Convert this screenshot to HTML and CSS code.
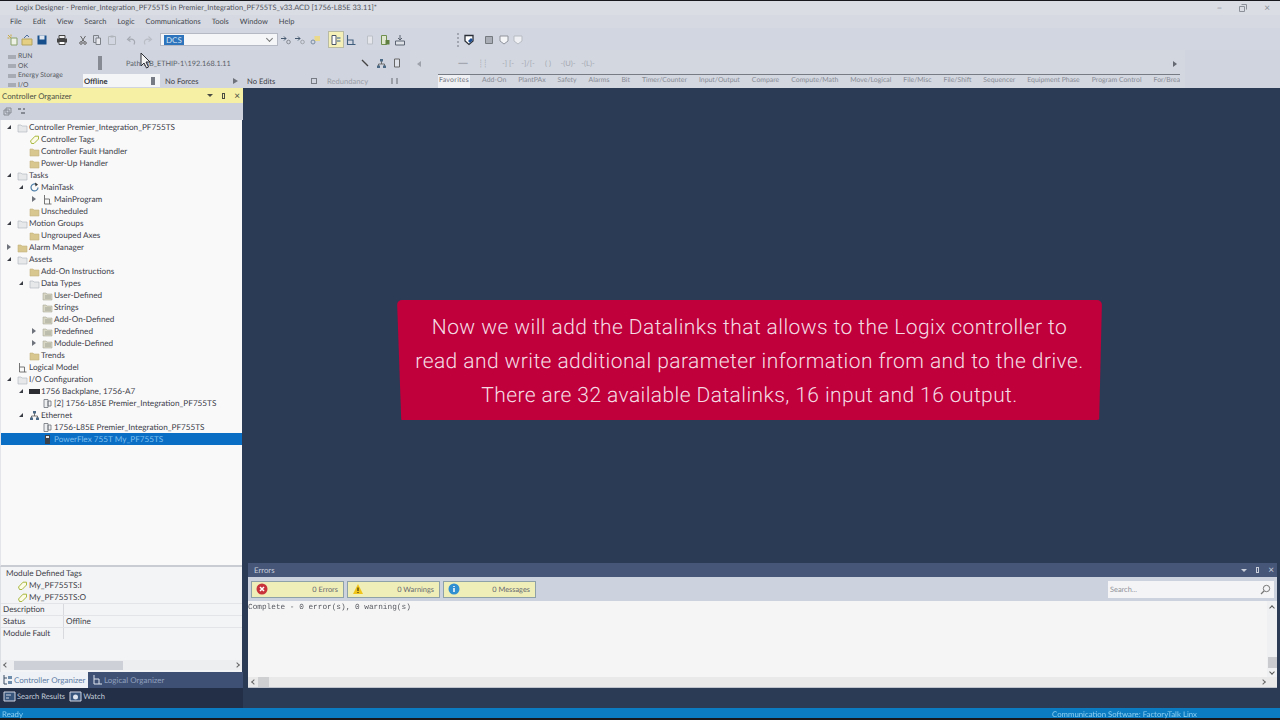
FILE: index.html
```html
<!DOCTYPE html>
<html lang="en">

<head>
    <meta charset="UTF-8">
    <meta name="viewport" content="width=device-width, initial-scale=1.0">
    <title>Logix Designer</title>
    <link rel="stylesheet" href="styles.css">
</head>

<body>
    <!-- Shared tree icons -->
    <svg class="sprite" aria-hidden="true">
        <symbol id="folder" viewBox="0 0 11 11"><path d="M1 3h3l1 1h5v6H1z" fill="#d8c78f" stroke="#c2b27e" stroke-width=".6"/></symbol>
        <symbol id="group" viewBox="0 0 11 11"><path d="M1 3h3l1 1h5v6H1z" fill="#e6e8ea" stroke="#b5bac0" stroke-width=".7"/></symbol>
        <symbol id="types" viewBox="0 0 11 11"><path d="M1 3h3l1 1h5v6H1z" fill="#d8d6c4" stroke="#a9a99a" stroke-width=".6"/><path d="M3 6h6M3 8h6" stroke="#8d9088" stroke-width=".7"/></symbol>
        <symbol id="tag" viewBox="0 0 11 11"><path d="M1.500 7 6 2.200h3.500V5L5 9.500H2.500z" fill="#fbfbe8" stroke="#a9b83e" stroke-width="1"/></symbol>
        <symbol id="module" viewBox="0 0 11 11"><path d="M2 1.500h4v8H2zM6 3h3v5H6z" fill="#eef0f2" stroke="#6d7278" stroke-width=".8"/></symbol>
        <symbol id="net" viewBox="0 0 11 11"><path d="M5.500 3v3M2.500 8V6h6v2" fill="none" stroke="#555" stroke-width=".8"/><path d="M4 1h3v2.500H4zM1 7.500h3V10H1zM7 7.500h3V10H7z" fill="#4c6a86"/></symbol>
        <symbol id="ladder" viewBox="0 0 11 11"><path d="M2.500 1v9M2.500 5h5v5M2.500 10h7" fill="none" stroke="#666" stroke-width=".9"/></symbol>
    </svg>

    <div class="app">
        <!-- Title and menu -->
        <header class="title-bar">
            <span class="title-text">Logix Designer - Premier_Integration_PF755TS in Premier_Integration_PF755TS_v33.ACD [1756-L85E 33.11]*</span>
            <div class="window-btns">
                <span>&#8211;</span>
                <svg width="8" height="8" viewBox="0 0 8 8"><path d="M2.500.500h5v5M.500 2.500h5v5h-5z" fill="none" stroke="#8b9099"/></svg>
                <span>&#215;</span>
            </div>
        </header>
        <nav class="menu-bar">
            <a>File</a><a>Edit</a><a>View</a><a>Search</a><a>Logic</a><a>Communications</a><a>Tools</a><a>Window</a><a>Help</a>
        </nav>

        <!-- Main toolbar -->
        <div class="tool-bar">
            <svg class="tool" viewBox="0 0 14 14"><path d="M5 5h6v7H5z" fill="#eef2e6" stroke="#8aa06a"/><path d="M2 2l3 3M5 1.500v2M1.500 5h2" stroke="#c9a83c"/></svg>
            <svg class="tool" viewBox="0 0 14 14"><path d="M2 6h10v6H2z" fill="#e4cf83" stroke="#b5a35f"/><path d="M4 5l3-3 2 2" fill="none" stroke="#4d6d9a"/></svg>
            <svg class="tool ml1" viewBox="0 0 14 14"><path d="M2.500 2.500h9v9h-9z" fill="#174f8d"/><path d="M4.500 2.500h5v4h-5z" fill="#dfe6ef"/></svg>
            <svg class="tool ml6" viewBox="0 0 14 14"><path d="M4 2.500h6v3H4z" fill="#eee" stroke="#444"/><path d="M2 5.500h10v4H2z" fill="#444"/><path d="M4 8.500h6v3H4z" fill="#fff" stroke="#444"/></svg>
            <svg class="tool ml7" viewBox="0 0 14 14"><path d="M4.500 3l4 6M9.500 3l-4 6" stroke="#666" fill="none"/><circle cx="5" cy="10" r="1.300" fill="none" stroke="#666"/><circle cx="9" cy="10" r="1.300" fill="none" stroke="#666"/></svg>
            <svg class="tool" viewBox="0 0 14 14"><path d="M3.500 2.500h5v7h-5z" fill="none" stroke="#7d8188"/><path d="M6 5h4.500v6.500H6z" fill="#e6e8ee" stroke="#7d8188"/></svg>
            <svg class="tool ml1" viewBox="0 0 14 14"><path d="M3.500 3.500h7v8h-7z" fill="none" stroke="#b0b4bb"/><path d="M5.500 2.500h3v2h-3z" fill="#b0b4bb"/></svg>
            <svg class="tool ml5" viewBox="0 0 14 14"><path d="M10 11.500c1.800-3.500-.5-6.500-5.500-5" fill="none" stroke="#a4a8b0" stroke-width="1.100"/><path d="M6.500 3.500l-3 3 3 2" fill="none" stroke="#a4a8b0" stroke-width="1.100"/></svg>
            <svg class="tool ml3" viewBox="0 0 14 14"><path d="M4 11.500c-1.800-3.500.5-6.500 5.500-5" fill="none" stroke="#b9bdc5" stroke-width="1.100"/><path d="M7.500 3.500l3 3-3 2" fill="none" stroke="#b9bdc5" stroke-width="1.100"/></svg>
            <div class="combo"><span class="combo-sel">DCS</span><span class="combo-arrow"></span></div>
            <svg class="tool" viewBox="0 0 14 14"><path d="M2 5.500h5M5 3.500l2 2-2 2" stroke="#46596f" fill="none"/><circle cx="9.500" cy="9" r="1.800" fill="none" stroke="#868a92"/></svg>
            <svg class="tool" viewBox="0 0 14 14"><path d="M2 5.500h5M5 3.500l2 2-2 2" stroke="#46596f" fill="none"/><circle cx="9.500" cy="9" r="1.800" fill="none" stroke="#a0a4ab"/></svg>
            <svg class="tool ml1" viewBox="0 0 14 14"><path d="M6.500 3h5.500v5H6.500z" fill="#ead98b"/><circle cx="5" cy="9" r="2" fill="none" stroke="#7a8ea4"/></svg>
            <div class="tool-on ml7"><svg class="tool" viewBox="0 0 14 14"><path d="M3 2.500h4v9H3z" fill="#fff" stroke="#4a5568"/><path d="M8 5h3.500M8 8h3.500" stroke="#2f5f8e"/></svg></div>
            <svg class="tool ml1" viewBox="0 0 14 14"><path d="M3.500 2v9.500h8M3.500 7h5.500v4.500" fill="none" stroke="#3f5d7d" stroke-width="1.100"/></svg>
            <svg class="tool ml5" viewBox="0 0 14 14"><path d="M4.500 3h5v8h-5z" fill="#e4e6eb" stroke="#bcc0c7"/></svg>
            <svg class="tool ml1" viewBox="0 0 14 14"><path d="M3.500 2.500h5v9h-5z" fill="#dfe8cf" stroke="#6e8f4e"/><path d="M7.500 7h4v4.500h-4z" fill="#5e7f3f"/></svg>
            <svg class="tool ml1" viewBox="0 0 14 14"><path d="M2.500 8h9v4h-9z" fill="#dfe3e8" stroke="#5b6470"/><path d="M7 2v5M5 5l2 2 2-2" fill="none" stroke="#5b6470"/></svg>
            <span class="grip"></span>
            <svg class="tool" viewBox="0 0 14 14"><path d="M3 2.500h8v5.500l-4 3.500L3 8z" fill="#fff" stroke="#2b3038" stroke-width="1.300"/><path d="M6 8l3-3 2 2-3 3z" fill="#1e4f95"/></svg>
            <svg class="tool ml6" viewBox="0 0 14 14"><path d="M3.500 3.500h7v7h-7z" fill="#a9aeb6" stroke="#74797f"/></svg>
            <svg class="tool ml1" viewBox="0 0 14 14"><path d="M3 3h8v5l-4 3-4-3z" fill="#f4f5f7" stroke="#8f949c"/></svg>
            <svg class="tool" viewBox="0 0 14 14"><path d="M3 3h8v5l-4 3-4-3z" fill="#eef0f3" stroke="#b7bbc2"/></svg>
        </div>

        <!-- Controller status and instruction palette -->
        <div class="status-strip">
            <div class="ctrl-status">
                <ul class="leds">
                    <li>RUN</li>
                    <li>OK</li>
                    <li>Energy Storage</li>
                    <li>I/O</li>
                </ul>
                <div class="ctrl-info">
                    <div class="path-row">
                        <span class="key-switch"></span>
                        <span class="path-text">Path: AB_ETHIP-1\192.168.1.11</span>
                        <div class="path-icons">
                            <svg width="10" height="10" viewBox="0 0 10 10"><path d="M2 2l3 3M5 5l3 3" stroke="#444" stroke-width="1.400"/></svg>
                            <svg width="11" height="11" viewBox="0 0 11 11"><use href="#net"/></svg>
                            <svg width="8" height="10" viewBox="0 0 8 10"><path d="M1.500 1h5v8h-5z" fill="#dfe2e8" stroke="#666"/></svg>
                        </div>
                    </div>
                    <div class="state-row">
                        <div class="state state-offline"><b>Offline</b><i class="state-mark"></i></div>
                        <div class="state state-forces">No Forces<i class="state-tri"></i></div>
                        <div class="state state-edits">No Edits<i class="state-lock"></i></div>
                        <div class="state state-red">Redundancy<i class="state-pair"></i></div>
                    </div>
                </div>
            </div>
            <div class="palette">
                <div class="rungs">
                    <span class="rung-arrow"></span>
                    <div class="rung-glyphs">
                        <span>&#9473;&#9473;</span><span>&#9482;&#9482;</span><span class="wide">-] [-</span><span>-]/[-</span><span>( )</span><span>-(U)-</span><span>-(L)-</span>
                    </div>
                    <span class="rung-next"></span>
                </div>
                <div class="pal-tabs">
                    <a class="active">Favorites</a><a>Add-On</a><a>PlantPAx</a><a>Safety</a><a>Alarms</a><a>Bit</a><a>Timer/Counter</a><a>Input/Output</a><a>Compare</a><a>Compute/Math</a><a>Move/Logical</a><a>File/Misc</a><a>File/Shift</a><a>Sequencer</a><a>Equipment Phase</a><a>Program Control</a><a>For/Brea</a>
                </div>
            </div>
        </div>

        <div class="work">
            <!-- Left pane -->
            <aside class="left-pane">
                <div class="pane-head yellow">
                    <span>Controller Organizer</span>
                    <div class="pane-btns"><i class="pin-down"></i><i class="pin"></i><i class="close">&#215;</i></div>
                </div>
                <div class="tree-tools">
                    <svg width="9" height="9" viewBox="0 0 9 9"><path d="M3 1h5v5H3zM1 3h5v5H1z" fill="none" stroke="#868b93"/></svg>
                    <svg width="9" height="9" viewBox="0 0 9 9"><path d="M1 1h3v2H1zM6 1h2v2H6zM4 5h4v2H4z" fill="#868b93"/></svg>
                </div>
                <div class="tree">
                    <div class="row l0"><i class="open"></i><svg class="ico"><use href="#group"/></svg>Controller Premier_Integration_PF755TS</div>
                    <div class="row l1"><i></i><svg class="ico"><use href="#tag"/></svg>Controller Tags</div>
                    <div class="row l1"><i></i><svg class="ico"><use href="#folder"/></svg>Controller Fault Handler</div>
                    <div class="row l1"><i></i><svg class="ico"><use href="#folder"/></svg>Power-Up Handler</div>
                    <div class="row l0"><i class="open"></i><svg class="ico"><use href="#group"/></svg>Tasks</div>
                    <div class="row l1"><i class="open"></i><svg class="ico" viewBox="0 0 11 11"><path d="M9 5.500A3.500 3.500 0 1 1 7 2.300" fill="none" stroke="#4e7fa8" stroke-width="1.200"/><path d="M6 .5 9 2.500 6.500 4.500z" fill="#333"/></svg>MainTask</div>
                    <div class="row l2"><i class="closed"></i><svg class="ico"><use href="#ladder"/></svg>MainProgram</div>
                    <div class="row l1"><i></i><svg class="ico"><use href="#folder"/></svg>Unscheduled</div>
                    <div class="row l0"><i class="open"></i><svg class="ico"><use href="#group"/></svg>Motion Groups</div>
                    <div class="row l1"><i></i><svg class="ico"><use href="#folder"/></svg>Ungrouped Axes</div>
                    <div class="row l0"><i class="closed"></i><svg class="ico"><use href="#folder"/></svg>Alarm Manager</div>
                    <div class="row l0"><i class="open"></i><svg class="ico"><use href="#group"/></svg>Assets</div>
                    <div class="row l1"><i></i><svg class="ico"><use href="#folder"/></svg>Add-On Instructions</div>
                    <div class="row l1"><i class="open"></i><svg class="ico"><use href="#group"/></svg>Data Types</div>
                    <div class="row l2"><i></i><svg class="ico"><use href="#types"/></svg>User-Defined</div>
                    <div class="row l2"><i></i><svg class="ico"><use href="#types"/></svg>Strings</div>
                    <div class="row l2"><i></i><svg class="ico"><use href="#types"/></svg>Add-On-Defined</div>
                    <div class="row l2"><i class="closed"></i><svg class="ico"><use href="#types"/></svg>Predefined</div>
                    <div class="row l2"><i class="closed"></i><svg class="ico"><use href="#types"/></svg>Module-Defined</div>
                    <div class="row l1"><i></i><svg class="ico"><use href="#folder"/></svg>Trends</div>
                    <div class="row l0"><i></i><svg class="ico"><use href="#ladder"/></svg>Logical Model</div>
                    <div class="row l0"><i class="open"></i><svg class="ico"><use href="#group"/></svg>I/O Configuration</div>
                    <div class="row l1"><i class="open"></i><svg class="ico" viewBox="0 0 11 11"><path d="M0 3h11v5H0z" fill="#2b2d33"/></svg>1756 Backplane, 1756-A7</div>
                    <div class="row l2"><i></i><svg class="ico"><use href="#module"/></svg>[2] 1756-L85E Premier_Integration_PF755TS</div>
                    <div class="row l1"><i class="open"></i><svg class="ico"><use href="#net"/></svg>Ethernet</div>
                    <div class="row l2"><i></i><svg class="ico"><use href="#module"/></svg>1756-L85E Premier_Integration_PF755TS</div>
                    <div class="row l2 selected"><i></i><svg class="ico" viewBox="0 0 11 11"><path d="M3 1h5v9H3z" fill="#3b4148"/><path d="M4 2h3v2H4z" fill="#e6e8ea"/></svg>PowerFlex 755T My_PF755TS</div>
                </div>

                <div class="details">
                    <div class="detail-title">Module Defined Tags</div>
                    <div class="detail-tag"><svg class="ico"><use href="#tag"/></svg>My_PF755TS:I</div>
                    <div class="detail-tag"><svg class="ico"><use href="#tag"/></svg>My_PF755TS:O</div>
                    <div class="prop"><span>Description</span><span></span></div>
                    <div class="prop"><span>Status</span><span>Offline</span></div>
                    <div class="prop"><span>Module Fault</span><span></span></div>
                    <div class="hscroll">
                        <i class="arrow-l"></i>
                        <span class="thumb"></span>
                        <i class="arrow-r"></i>
                    </div>
                </div>

                <div class="org-tabs">
                    <a class="active"><svg class="ico" viewBox="0 0 11 11"><path d="M2 1v9h3M2 4h3" fill="none" stroke="#394a63"/><path d="M6 2h4v3H6zM6 7h4v3H6z" fill="#6d8cab"/></svg>Controller Organizer</a>
                    <a><svg class="ico" viewBox="0 0 11 11"><path d="M2 1v9h8M2 5h5v5" fill="none" stroke="#dfe5ee"/></svg>Logical Organizer</a>
                </div>
                <div class="dock-tabs">
                    <a><svg class="ico wide" viewBox="0 0 13 11"><path d="M1 1h11v9H1z" fill="#38557c" stroke="#cfd6e2"/><path d="M3 4h5M3 7h3" stroke="#cfd6e2"/></svg>Search Results</a>
                    <a><svg class="ico wide" viewBox="0 0 13 11"><path d="M1 1h11v9H1z" fill="#38557c" stroke="#cfd6e2"/><circle cx="6.500" cy="6" r="2.500" fill="#dfe5ee"/></svg>Watch</a>
                </div>
            </aside>

            <!-- Editor area -->
            <main class="main-area">
                <div class="editor"></div>
                <section class="errors">
                    <div class="pane-head slate">
                        <span>Errors</span>
                        <div class="pane-btns"><i class="pin-down"></i><i class="pin"></i><i class="close">&#215;</i></div>
                    </div>
                    <div class="err-tools">
                        <div class="err-btn"><svg width="12" height="12" viewBox="0 0 12 12"><circle cx="6" cy="6" r="5.500" fill="#c8323a"/><path d="M4 4l4 4M8 4l-4 4" stroke="#fff" stroke-width="1.500"/></svg><span>0 Errors</span></div>
                        <div class="err-btn"><svg width="12" height="12" viewBox="0 0 12 12"><path d="M6 1l5 10H1z" fill="#f0c419"/><path d="M6 4.500v3.500M6 9v1" stroke="#4b3f10" stroke-width="1.300"/></svg><span>0 Warnings</span></div>
                        <div class="err-btn"><svg width="12" height="12" viewBox="0 0 12 12"><circle cx="6" cy="6" r="5.500" fill="#2f8fd0"/><path d="M6 5v4M6 3v1" stroke="#fff" stroke-width="1.500"/></svg><span>0 Messages</span></div>
                        <div class="err-search">
                            <span>Search...</span>
                            <svg width="11" height="11" viewBox="0 0 11 11"><circle cx="6.500" cy="4.500" r="3.200" fill="none" stroke="#777"/><path d="M4 7 1 10" stroke="#777" stroke-width="1.200"/></svg>
                        </div>
                    </div>
                    <div class="err-body">
                        <pre class="err-text">Complete - 0 error(s), 0 warning(s)</pre>
                        <div class="vscroll"><i class="up"></i><span class="thumb"></span><i class="down"></i></div>
                    </div>
                    <div class="err-hscroll">
                        <i class="arrow-l"></i><span class="thumb"></span><i class="arrow-r"></i>
                    </div>
                </section>
            </main>
        </div>

        <footer class="status-bar">
            <span>Ready</span>
            <span class="status-right">Communication Software: FactoryTalk Linx</span>
        </footer>

        <!-- Caption overlay -->
        <div class="caption">
            Now we will add the Datalinks that allows to the Logix controller to<br>
            read and write additional parameter information from and to the drive.<br>
            There are 32 available Datalinks, 16 input and 16 output.
        </div>

        <!-- Mouse pointer -->
        <svg class="cursor" width="11" height="17" viewBox="0 0 11 17"><path d="M1 1v13l3-3 2.500 5 2-1-2.500-5h4z" fill="#f4f4f4" stroke="#2a2d33"/></svg>
    </div>
</body>

</html>
```
FILE: styles.css
```css
:root {
    --bar-bg: #d0d4de;
    --dark-bg: #2b3a55;
    --slate: #465679;
    --selected: #0b6ec5;
    --status-blue: #0b7cc2;
    --ui-font: Lato, 'Noto Sans', sans-serif;
}

* {
    margin: 0;
    padding: 0;
    box-sizing: border-box;
}

body {
    width: 1280px;
    height: 720px;
    overflow: hidden;
    background-color: #16181d;
    font-family: var(--ui-font);
    font-size: 8.2px;
    text-rendering: geometricPrecision;
    color: #3c4048;
}

i {
    font-style: normal;
}

.sprite {
    display: none;
}

.app {
    position: relative;
    width: 1280px;
    height: 717px;
    margin-top: 1px;
    display: flex;
    flex-direction: column;
    background-color: var(--bar-bg);
    filter: blur(0.35px);
}

/* Title and menu */
.title-bar {
    height: 14px;
    flex: none;
    display: flex;
    align-items: center;
    justify-content: space-between;
    padding: 0 0 1px 16px;
    background-color: #dadde4;
    font-size: 7.45px;
    color: #4d5159;
}

.window-btns {
    display: flex;
    align-items: center;
    gap: 17px;
    padding-right: 10px;
    font-size: 10px;
    color: #8b9099;
}

.menu-bar {
    height: 13px;
    flex: none;
    display: flex;
    align-items: center;
    gap: 11px;
    padding-left: 10px;
    background-color: #d6d9e1;
    font-size: 7.5px;
    color: #444850;
}

.tool-bar {
    height: 22px;
    flex: none;
    display: flex;
    align-items: center;
    padding: 1px 0 0 6px;
    background-color: #d2d6e0;
}

.tool {
    width: 14px;
    height: 14px;
    flex: none;
}

.ml1 {
    margin-left: 1px;
}

.ml3 {
    margin-left: 3px;
}

.ml5 {
    margin-left: 5px;
}

.ml6 {
    margin-left: 6px;
}

.ml7 {
    margin-left: 7px;
}

.tool-on {
    display: flex;
    align-items: center;
    height: 15px;
    background-color: #f5efb8;
    outline: 1px solid #b9bba2;
}

.combo {
    width: 118px;
    height: 13px;
    flex: none;
    display: flex;
    align-items: center;
    justify-content: space-between;
    margin: 0 1px 0 5px;
    padding: 0 3px;
    background-color: #f5f6f8;
    border: 1px solid #b4b9c4;
    font-size: 8px;
}

.combo-sel {
    padding: 0 2px;
    background-color: #2e74bd;
    color: #d7e4f2;
}

.combo-arrow {
    width: 5px;
    height: 5px;
    margin: -2px 2px 0 0;
    border-right: 1px solid #777;
    border-bottom: 1px solid #777;
    transform: rotate(45deg);
}

.grip {
    width: 2px;
    height: 14px;
    flex: none;
    margin: 0 3px 0 50px;
    border-left: 2px dotted #a2a6b0;
}

/* Status strip */
.status-strip {
    height: 38px;
    flex: none;
    display: flex;
    background-color: #d0d4de;
}

.ctrl-status {
    width: 410px;
    flex: none;
    display: flex;
}

.leds {
    width: 83px;
    flex: none;
    padding: 2px 0 0 8px;
    list-style: none;
    font-size: 6.8px;
    line-height: 9.5px;
    color: #50545c;
}

.leds li {
    display: flex;
    align-items: center;
    gap: 2px;
}

.leds li::before {
    content: '';
    width: 8px;
    height: 4px;
    background-color: #a7abb4;
}

.ctrl-info {
    flex: 1;
    display: flex;
    flex-direction: column;
}

.path-row {
    height: 24px;
    display: flex;
    align-items: center;
    padding-top: 2px;
    font-size: 7.3px;
    color: #5b5f68;
}

.key-switch {
    width: 4px;
    height: 14px;
    margin: 0 24px 0 15px;
    background-color: #868a92;
}

.path-text {
    flex: 1;
}

.path-icons {
    display: flex;
    align-items: center;
    gap: 6px;
    padding-right: 9px;
}

.state-row {
    height: 13px;
    display: flex;
    gap: 3px;
    font-size: 7.6px;
}

.state {
    display: flex;
    align-items: center;
    justify-content: space-between;
    padding: 0 5px 0 1px;
}

.state-offline {
    width: 77px;
    background-color: #f4f5f7;
    color: #33363c;
}

.state-forces {
    width: 80px;
    padding-left: 2px;
}

.state-edits {
    width: 76px;
    padding-left: 1px;
}

.state-red {
    width: 78px;
    padding-left: 2px;
    color: #9a9ea7;
}

.state-mark {
    width: 4px;
    height: 8px;
    background-color: #777b83;
}

.state-tri {
    border-left: 5px solid #6e727a;
    border-top: 3px solid transparent;
    border-bottom: 3px solid transparent;
}

.state-lock {
    width: 6px;
    height: 6px;
    border: 1px solid #777b83;
}

.state-pair {
    width: 7px;
    height: 6px;
    border-left: 2px solid #9a9ea7;
    border-right: 2px solid #9a9ea7;
}

.palette {
    width: 775px;
    flex: none;
    padding: 0 5px 0 28px;
    display: flex;
    flex-direction: column;
    background-color: #d3d7e0;
}

.rungs {
    height: 24px;
    display: flex;
    align-items: center;
    margin-left: -21px;
    padding-top: 3px;
}

.rung-arrow {
    border-right: 4px solid #9ea2ab;
    border-top: 3px solid transparent;
    border-bottom: 3px solid transparent;
}

.rung-glyphs {
    flex: 1;
    display: flex;
    padding-left: 32px;
    font-size: 7.5px;
    color: #a3a7b0;
}

.rung-glyphs span {
    width: 20px;
    text-align: center;
}

.rung-glyphs .wide {
    margin-left: 5px;
}

.rung-next {
    margin-right: 3px;
    border-left: 4px solid #656971;
    border-top: 3px solid transparent;
    border-bottom: 3px solid transparent;
}

.pal-tabs {
    height: 14px;
    display: flex;
    gap: 12px;
    border-top: 1px solid #777b84;
    overflow: hidden;
    font-size: 6.9px;
    line-height: 10px;
    color: #888c95;
    white-space: nowrap;
}

.pal-tabs a.active {
    padding: 0 1px;
    letter-spacing: 0.3px;
    background-color: #eff0f3;
    color: #6f737b;
}

/* Layout below the toolbars */
.work {
    flex: 1;
    min-height: 0;
    display: flex;
    background-color: var(--dark-bg);
}

.left-pane {
    width: 243px;
    flex: none;
    display: flex;
    flex-direction: column;
}

.pane-head {
    height: 14px;
    flex: none;
    display: flex;
    align-items: center;
    justify-content: space-between;
    padding: 0 3px 0 2px;
    font-size: 7.8px;
}

.pane-head.yellow {
    height: 15px;
    background-color: #f5f0a3;
    color: #4a4c44;
}

.pane-head.slate {
    padding-left: 6px;
    background-color: var(--slate);
    color: #c9d0dc;
}

.pane-btns {
    display: flex;
    align-items: center;
    gap: 9px;
    font-size: 10px;
}

.pin-down {
    border-top: 3px solid currentColor;
    border-left: 3px solid transparent;
    border-right: 3px solid transparent;
}

.pin {
    width: 3px;
    height: 6px;
    border: 1px solid currentColor;
}

.tree-tools {
    height: 17px;
    flex: none;
    display: flex;
    align-items: center;
    gap: 5px;
    padding-left: 3px;
    background-color: #cdd1db;
}

.tree {
    flex: 1;
    min-height: 0;
    padding-top: 1px;
    margin-right: 1px;
    background-color: #f9f9fa;
    border-left: 1px solid #e3e5ea;
    border-bottom: 2px solid #c9ccd3;
}

.row {
    height: 12px;
    display: flex;
    align-items: center;
    white-space: nowrap;
    line-height: 12px;
}

.row i {
    width: 10px;
    height: 6px;
    flex: none;
    position: relative;
}

.row i.open::before {
    content: '';
    position: absolute;
    left: 0;
    top: 1px;
    border-bottom: 4px solid #3a3d44;
    border-left: 4px solid transparent;
}

.row i.closed::before {
    content: '';
    position: absolute;
    left: 0;
    top: 0;
    border-left: 4px solid #6f737b;
    border-top: 3px solid transparent;
    border-bottom: 3px solid transparent;
}

.ico {
    width: 11px;
    height: 11px;
    flex: none;
    margin-right: 1px;
}

.ico.wide {
    width: 13px;
}

.l0 {
    padding-left: 6px;
}

.l1 {
    padding-left: 18px;
}

.l2 {
    padding-left: 31px;
}

.row.selected {
    background-color: var(--selected);
    color: #7fc0ee;
}

/* Details under the tree */
.details {
    height: 105px;
    flex: none;
    margin-right: 1px;
    background-color: #f3f4f5;
    border-left: 1px solid #dcdfe4;
}

.detail-title {
    height: 12px;
    padding-left: 5px;
    line-height: 12px;
}

.detail-tag {
    height: 12px;
    display: flex;
    align-items: center;
    padding-left: 16px;
}

.prop {
    height: 12px;
    display: grid;
    grid-template-columns: 60px 1fr;
    border-top: 1px solid #e2e4e8;
    padding-left: 2px;
    line-height: 11px;
}

.prop span + span {
    padding-left: 2px;
    border-left: 1px solid #d7d9de;
}

.hscroll {
    display: flex;
    align-items: center;
    height: 10px;
    margin-top: 21px;
    padding: 0 3px;
    background-color: #eceef0;
}

.hscroll .thumb {
    width: 109px;
    height: 9px;
    margin-left: 6px;
    background-color: #cdd0d6;
}

.arrow-l,
.arrow-r {
    width: 4px;
    height: 4px;
    flex: none;
    border-left: 1px solid #666;
    border-bottom: 1px solid #666;
    transform: rotate(45deg);
}

.arrow-r {
    margin-left: auto;
    transform: rotate(225deg);
}

/* Organizer tabs */
.org-tabs {
    height: 16px;
    flex: none;
    display: flex;
    gap: 2px;
    background-color: #3f5075;
    font-size: 8px;
}

.org-tabs a {
    display: flex;
    align-items: center;
    padding: 0 2px 1px;
    white-space: nowrap;
    color: #8fa0bd;
}

.org-tabs a.active {
    width: 88px;
    background-color: #eef1f5;
    color: #5f7da6;
}

.dock-tabs {
    height: 20px;
    flex: none;
    display: flex;
    gap: 4px;
    padding: 1px 0 0 3px;
    background-color: #222f47;
    font-size: 7.6px;
}

.dock-tabs a {
    height: 14px;
    display: flex;
    align-items: center;
    color: #c3ccd9;
}

/* Editor and error list */
.main-area {
    flex: 1;
    min-width: 0;
    display: flex;
    flex-direction: column;
}

.editor {
    flex: 1;
}

.errors {
    height: 125px;
    flex: none;
    margin: 0 3px 20px 5px;
    display: flex;
    flex-direction: column;
}

.err-tools {
    height: 24px;
    flex: none;
    display: flex;
    align-items: center;
    gap: 3px;
    padding-left: 3px;
    background-color: #ccd2de;
}

.err-btn {
    width: 93px;
    height: 17px;
    display: flex;
    align-items: center;
    justify-content: space-between;
    padding: 0 5px 0 4px;
    background-color: #f0eeb8;
    border: 1px solid #8ea0a8;
    font-size: 7.4px;
    color: #656970;
}

.err-search {
    width: 166px;
    height: 17px;
    display: flex;
    align-items: center;
    justify-content: space-between;
    margin-left: auto;
    margin-right: 3px;
    padding: 0 3px 0 2px;
    background-color: #f4f4f6;
    font-size: 7.4px;
    color: #8f9298;
}

.err-body {
    flex: 1;
    min-height: 0;
    display: flex;
    background-color: #f5f5f5;
}

.err-text {
    flex: 1;
    padding: 3px 0 0;
    font-family: 'Liberation Mono', monospace;
    font-size: 7.75px;
    line-height: 9px;
    color: #55585e;
}

.vscroll {
    width: 10px;
    flex: none;
    display: flex;
    flex-direction: column;
    align-items: center;
    padding-top: 5px;
    background-color: #eff0f1;
}

.vscroll .thumb {
    width: 9px;
    height: 11px;
    margin-top: auto;
    background-color: #c9cbcf;
}

.vscroll i {
    width: 4px;
    height: 4px;
    border-left: 1px solid #555;
    border-top: 1px solid #555;
    transform: rotate(45deg);
}

.vscroll i.down {
    margin: 2px 0 3px;
    transform: rotate(225deg);
}

.err-hscroll {
    height: 11px;
    flex: none;
    display: flex;
    align-items: center;
    padding: 0 12px 0 4px;
    background-color: #e9e9e9;
    border-bottom: 1px solid #bfc3cb;
}

.err-hscroll .thumb {
    width: 11px;
    height: 10px;
    margin-left: 2px;
    background-color: #cfd0d2;
}

.status-bar {
    height: 10px;
    flex: none;
    display: flex;
    justify-content: space-between;
    padding: 0 0 0 2px;
    background-color: var(--status-blue);
    font-size: 7.8px;
    line-height: 12px;
    color: #8fd0f2;
}

.status-right {
    margin-right: 83px;
}

/* Overlays */
.caption {
    position: absolute;
    left: 397px;
    top: 299px;
    width: 705px;
    height: 120px;
    padding-top: 11px;
    border-radius: 5px;
    clip-path: polygon(0 0, 100% 0, 99.6% 100%, 0.6% 100%);
    background-color: #bf003b;
    font-family: Roboto, sans-serif;
    font-size: 21px;
    font-weight: 300;
    line-height: 34px;
    text-align: center;
    letter-spacing: 0.42px;
    color: #f5dce4;
}

.cursor {
    position: absolute;
    left: 140px;
    top: 51px;
}
```
